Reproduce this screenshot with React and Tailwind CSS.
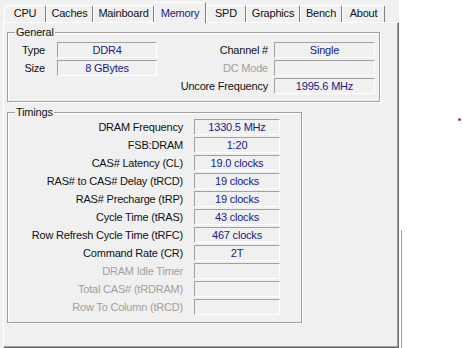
import React from 'react';

const tabs = [
  { name: 'CPU', w: 'w-[42px]' },
  { name: 'Caches', w: 'w-[47px]' },
  { name: 'Mainboard', w: 'w-[61px]' },
  { name: 'Memory', w: 'w-[52px]', active: true },
  { name: 'SPD', w: 'w-[40px]' },
  { name: 'Graphics', w: 'w-[54px]' },
  { name: 'Bench', w: 'w-[42px]' },
  { name: 'About', w: 'w-[43px]' },
];

const timings = [
  ['DRAM Frequency', '1330.5 MHz'],
  ['FSB:DRAM', '1:20'],
  ['CAS# Latency (CL)', '19.0 clocks'],
  ['RAS# to CAS# Delay (tRCD)', '19 clocks'],
  ['RAS# Precharge (tRP)', '19 clocks'],
  ['Cycle Time (tRAS)', '43 clocks'],
  ['Row Refresh Cycle Time (tRFC)', '467 clocks'],
  ['Command Rate (CR)', '2T'],
  ['DRAM Idle Timer', null],
  ['Total CAS# (tRDRAM)', null],
  ['Row To Column (tRCD)', null],
];

function Field({ value, className = '' }) {
  return (
    <div
      className={
        'h-[16px] border-t border-l border-[#a0a0a0] border-b-white border-r-white border-b border-r bg-[#f0f0f0] text-center leading-[14px] text-[#1a1a80] ' +
        className
      }
    >
      {value}
    </div>
  );
}

function Group({ title, className = '', children }) {
  return (
    <div
      className={
        'border border-[#a0a0a0] shadow-[inset_1px_1px_0_#ffffff,1px_1px_0_#ffffff] ' +
        className
      }
    >
      <div className="-mt-[7px] ml-[7px] w-fit bg-[#f0f0f0] px-px leading-[13px] text-[#111]">
        {title}
      </div>
      {children}
    </div>
  );
}

export default function App() {
  return (
    <div
      className="flex h-[348px] w-[463px] overflow-hidden bg-white text-[11px] tracking-[-0.2px] text-[#111]"
      style={{ fontFamily: '"Liberation Sans", Arial, sans-serif' }}
    >
      {/* CPU-Z window */}
      <div className="flex h-[348px] w-[399px] flex-col bg-[#f0f0f0]">
        {/* tab strip */}
        <div className="mt-[2px] flex h-[20px] items-end pl-[4px]">
          {tabs.map((t) =>
            t.active ? (
              <div
                key={t.name}
                className={
                  'relative z-10 -mb-px h-[21px] border-l border-t border-white border-r border-r-[#808080] bg-[#f0f0f0] pt-[4px] text-center leading-[13px] text-[#1a1a80] ' +
                  t.w
                }
              >
                {t.name}
              </div>
            ) : (
              <div
                key={t.name}
                className={
                  'h-[17px] rounded-t-[2px] border-l border-t border-white border-r border-r-[#808080] bg-[#f0f0f0] pt-px text-center leading-[13px] ' +
                  t.w
                }
              >
                {t.name}
              </div>
            )
          )}
        </div>

        {/* tab page */}
        <div className="ml-[3px] flex flex-1 flex-col border border-l-white border-t-white border-r-[#696969] border-b-[#696969] shadow-[inset_-1px_-1px_0_#a0a0a0]">
          <Group title="General" className="ml-[3px] mt-[9px] w-[373px] pb-[7px]">
            <div className="mt-[3px] flex flex-col gap-[2px] pr-[4px]">
              <div className="flex items-center">
                <div className="w-[37px] text-right leading-[16px]">Type</div>
                <Field value="DDR4" className="ml-[12px] w-[100px]" />
                <div className="flex-1 text-right leading-[16px]">Channel #</div>
                <Field value="Single" className="ml-[6px] w-[101px]" />
              </div>
              <div className="flex items-center">
                <div className="w-[37px] text-right leading-[16px]">Size</div>
                <Field value="8 GBytes" className="ml-[12px] w-[100px]" />
                <div className="flex-1 text-right leading-[16px] text-[#a0a0a0]">DC Mode</div>
                <Field value="" className="ml-[6px] w-[101px]" />
              </div>
              <div className="flex items-center">
                <div className="flex-1 text-right leading-[16px]">Uncore Frequency</div>
                <Field value="1995.6 MHz" className="ml-[6px] w-[101px]" />
              </div>
            </div>
          </Group>

          <Group title="Timings" className="ml-[3px] mt-[10px] w-[295px] pb-[7px]">
            <div className="flex flex-col gap-[2px] pr-[20px]">
              {timings.map(([label, value]) => (
                <div key={label} className="flex items-center">
                  <div
                    className={
                      'w-[175px] text-right leading-[16px] ' +
                      (value === null ? 'text-[#a0a0a0]' : 'text-[#111]')
                    }
                  >
                    {label}
                  </div>
                  <Field value={value} className="ml-[11px] w-[86px]" />
                </div>
              ))}
            </div>
          </Group>
        </div>
      </div>

      {/* desktop strip to the right */}
      <div className="relative flex-1">
        <div className="absolute left-[2px] top-[230px] h-[118px] w-px bg-[#d09080]" />
        <div className="absolute left-[59px] top-[118px] h-[3px] w-[3px] rounded-full bg-[#c03040]" />
      </div>
    </div>
  );
}
